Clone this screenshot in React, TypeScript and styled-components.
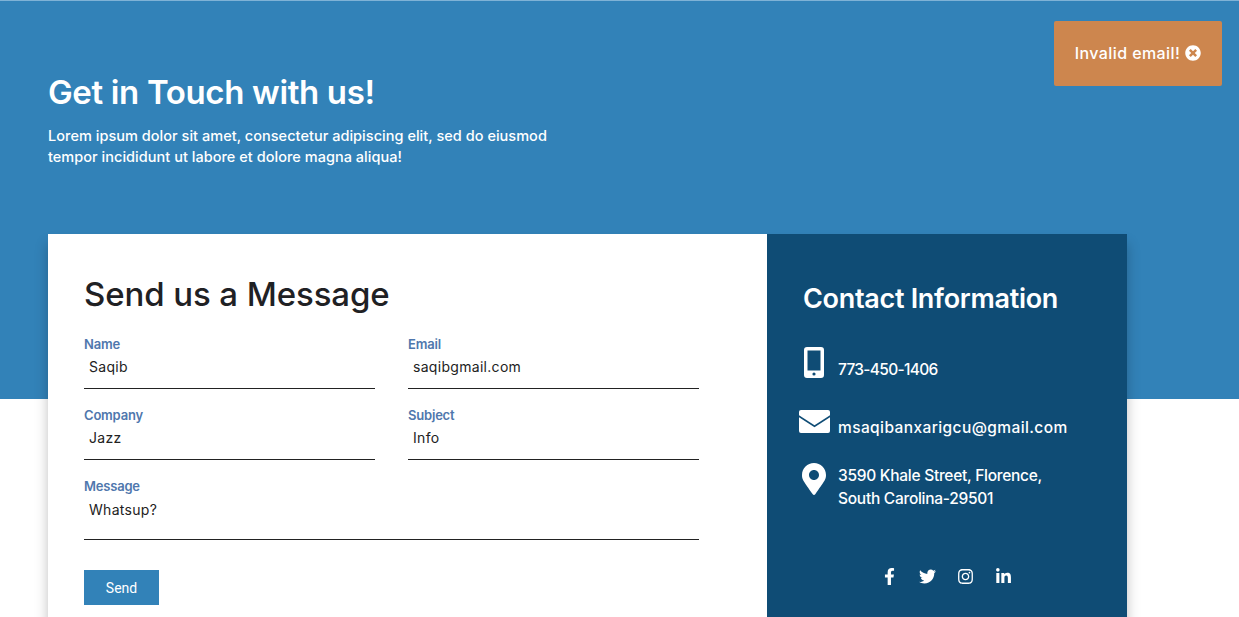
// App.tsx
import React from 'react';
import styled, { createGlobalStyle } from 'styled-components';
import {
  FaFacebookF,
  FaTwitter,
  FaInstagram,
  FaLinkedinIn,
  FaMapMarkerAlt,
  FaTimesCircle,
} from 'react-icons/fa';

const GlobalStyle = createGlobalStyle`
  html, body {
    margin: 0;
    height: 100%;
    overflow: hidden;
    background: #fff;
    font-family: Inter, "Liberation Sans", sans-serif;
  }
  * { box-sizing: border-box; }
`;

const Page = styled.div`
  height: 617px;
  overflow: hidden;
  position: relative;
  border-top: 1px solid #7fb2d6;
`;

const Hero = styled.section`
  height: 398px;
  background: #3282b8;
  padding: 72px 48px 0;
  color: #fff;
`;

const Title = styled.h1`
  margin: 0 0 14px;
  font-size: 33px;
  line-height: 38px;
  font-weight: 600;
  letter-spacing: -0.35px;
`;

const Lead = styled.p`
  margin: 0 0 67px;
  width: 520px;
  font-size: 14.5px;
  line-height: 21px;
  font-weight: 500;
  letter-spacing: 0.03px;
`;

const Card = styled.div`
  width: 1079px;
  height: 420px;
  display: grid;
  grid-template-columns: 719px 360px;
  background: #fff;
  box-shadow: 0 10px 12px rgba(0, 0, 0, 0.25);
`;

const FormPanel = styled.div`
  padding: 37px 36px 0;
  color: #222;
`;

const FormTitle = styled.h2`
  margin: 0 0 20px;
  font-size: 33px;
  line-height: 46px;
  font-weight: 500;
  letter-spacing: -0.1px;
  color: #1f2124;
`;

const Fields = styled.div`
  display: grid;
  grid-template-columns: 291px 291px;
  column-gap: 33px;
  row-gap: 19px;
`;

const Field = styled.label<{ $wide?: boolean }>`
  display: block;
  grid-column: ${p => (p.$wide ? '1 / -1' : 'auto')};
  height: ${p => (p.$wide ? '61px' : '52px')};
  border-bottom: 1px solid #222;
`;

const FieldLabel = styled.span`
  display: block;
  font-size: 13px;
  line-height: 14px;
  font-weight: 600;
  letter-spacing: -0.2px;
  color: #4f77ad;
`;

const FieldValue = styled.input`
  display: block;
  width: 100%;
  height: 22px;
  margin-top: 4px;
  padding: 0 5px;
  border: 0;
  outline: 0;
  background: transparent;
  font-family: inherit;
  font-size: 14px;
  letter-spacing: 0.3px;
  color: #222;
`;

const FieldArea = styled.textarea`
  display: block;
  width: 100%;
  height: 30px;
  margin-top: 6px;
  padding: 3px 5px;
  border: 0;
  outline: 0;
  resize: none;
  background: transparent;
  font-family: inherit;
  font-size: 14px;
  line-height: 16px;
  letter-spacing: 0.3px;
  color: #222;
`;

const SendButton = styled.button`
  display: block;
  margin-top: 30px;
  width: 75px;
  height: 35px;
  border: 0;
  background: #3282b8;
  color: #fff;
  font-family: Roboto, sans-serif;
  font-size: 14px;
`;

const InfoPanel = styled.aside`
  background: #0f4c75;
  color: #fff;
  padding: 46px 31px 0;
`;

const InfoTitle = styled.h3`
  margin: 0 0 29px 5px;
  font-size: 27px;
  line-height: 38px;
  font-weight: 600;
  letter-spacing: -0.3px;
`;

const InfoRow = styled.div<{ $gap: number; $align: string }>`
  display: flex;
  align-items: ${p => p.$align};
  margin-bottom: ${p => p.$gap}px;
`;

const InfoIcon = styled.div<{ $drop?: number }>`
  width: 40px;
  flex: none;
  display: flex;
  justify-content: center;
  padding-right: 8px;
  margin-bottom: ${p => p.$drop ?? 0}px;
  svg { display: block; }
`;

const InfoText = styled.div<{ $track: number; $top?: number }>`
  margin-top: ${p => p.$top ?? 0}px;
  font-size: 15.5px;
  line-height: 23px;
  font-weight: 500;
  letter-spacing: ${p => p.$track}px;
`;

const Socials = styled.div`
  display: flex;
  justify-content: center;
  align-items: center;
  gap: 21px;
  margin-top: 58px;
  padding-right: 2px;
  font-size: 17px;
  svg { display: block; }
`;

const Toast = styled.div`
  position: absolute;
  top: 20px;
  right: 17px;
  width: 168px;
  height: 65px;
  padding-bottom: 2px;
  border-radius: 2px;
  background: #cd864e;
  color: #fff;
  display: flex;
  align-items: center;
  justify-content: center;
  gap: 5px;
  font-size: 16px;
  font-weight: 500;
  letter-spacing: 0.4px;
`;

const MobileIcon = () => (
  <svg width="20" height="31" viewBox="0 0 20 31" fill="#fff">
    <path
      fillRule="evenodd"
      d="M3 0h14a3 3 0 0 1 3 3v25a3 3 0 0 1-3 3H3a3 3 0 0 1-3-3V3a3 3 0 0 1 3-3zm.5 3.5v20h13v-20h-13zM10 25.4a1.6 1.6 0 1 0 0 3.2 1.6 1.6 0 0 0 0-3.2z"
    />
  </svg>
);

const MailIcon = () => (
  <svg width="31" height="23" viewBox="0 0 31 23" fill="#fff">
    <path d="M2 0h27a2 2 0 0 1 2 2v3.2L15.5 15.2 0 5.2V2a2 2 0 0 1 2-2z" />
    <path d="M0 7.2l15.5 10 15.5-10V21a2 2 0 0 1-2 2H2a2 2 0 0 1-2-2z" />
  </svg>
);

export default function App() {
  return (
    <Page>
      <GlobalStyle />
      <Hero>
        <Title>Get in Touch with us!</Title>
        <Lead>
          Lorem ipsum dolor sit amet, consectetur adipiscing elit, sed do eiusmod tempor incididunt
          ut labore et dolore magna aliqua!
        </Lead>
        <Card>
          <FormPanel>
            <FormTitle>Send us a Message</FormTitle>
            <Fields>
              <Field>
                <FieldLabel>Name</FieldLabel>
                <FieldValue defaultValue="Saqib" />
              </Field>
              <Field>
                <FieldLabel>Email</FieldLabel>
                <FieldValue defaultValue="saqibgmail.com" />
              </Field>
              <Field>
                <FieldLabel>Company</FieldLabel>
                <FieldValue defaultValue="Jazz" />
              </Field>
              <Field>
                <FieldLabel>Subject</FieldLabel>
                <FieldValue defaultValue="Info" />
              </Field>
              <Field $wide>
                <FieldLabel>Message</FieldLabel>
                <FieldArea defaultValue="Whatsup?" />
              </Field>
            </Fields>
            <SendButton>Send</SendButton>
          </FormPanel>
          <InfoPanel>
            <InfoTitle>Contact Information</InfoTitle>
            <InfoRow $gap={29} $align="flex-end">
              <InfoIcon $drop={3}><MobileIcon /></InfoIcon>
              <InfoText $track={-0.7}>773-450-1406</InfoText>
            </InfoRow>
            <InfoRow $gap={24} $align="flex-end">
              <InfoIcon $drop={6}><MailIcon /></InfoIcon>
              <InfoText $track={0.4}>msaqibanxarigcu@gmail.com</InfoText>
            </InfoRow>
            <InfoRow $gap={0} $align="flex-start">
              <InfoIcon><FaMapMarkerAlt size={32} /></InfoIcon>
              <InfoText $track={-0.27} $top={1}>
                3590 Khale Street, Florence,
                <br />
                South Carolina-29501
              </InfoText>
            </InfoRow>
            <Socials>
              <FaFacebookF />
              <FaTwitter />
              <FaInstagram />
              <FaLinkedinIn />
            </Socials>
          </InfoPanel>
        </Card>
      </Hero>
      <Toast>
        Invalid email!
        <FaTimesCircle size={16} />
      </Toast>
    </Page>
  );
}
